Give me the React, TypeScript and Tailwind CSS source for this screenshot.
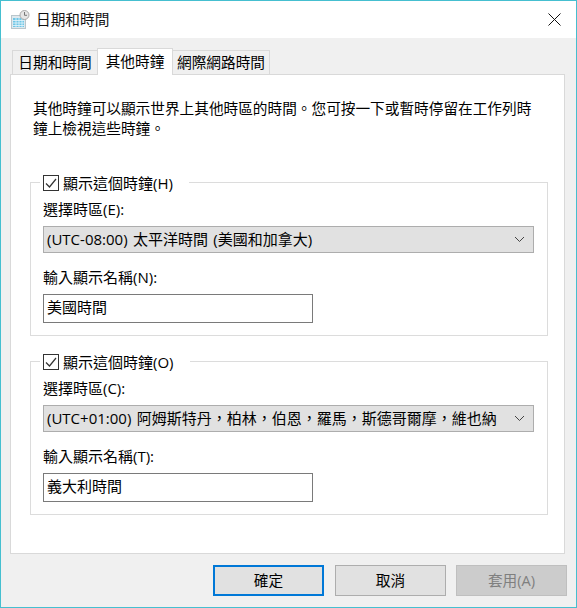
function CheckBox() {
  return (
    <span className="flex h-4 w-4 shrink-0 items-center justify-center border border-[#333] bg-white">
      <svg width="14" height="14" viewBox="0 0 14 14" fill="none" stroke="#333" strokeWidth="1.2">
        <path d="M2 7.5 L5.5 11 L12 3" />
      </svg>
    </span>
  );
}

function Chevron() {
  return (
    <svg width="11" height="7" viewBox="0 0 11 7" fill="none" stroke="#444" strokeWidth="1">
      <path d="M1 1 L5.5 5.5 L10 1" />
    </svg>
  );
}

function ClockBlock({ check, zone, name, label, value }: { check: string; zone: string; name: string; label: string; value: string }) {
  return (
    <fieldset className="ml-[19px] h-[163px] w-[518px] border border-[#dcdcdc] pl-[12px] pr-[13px] text-[15px]">
      <legend className="-ml-[3px] flex h-[18px] items-start gap-[4px] pl-[3px] pr-[16px] pt-[2px]">
        <CheckBox />
        <span className="-mt-[2px] whitespace-nowrap">{check}</span>
      </legend>
      <div className="mt-[7px] h-[22px] leading-[22px]">{label}</div>
      <div className="mt-[6px] flex h-[27px] items-center justify-between border border-[#adadad] bg-[#e1e1e1] pl-[3px] pr-[8px]">
        <span className="whitespace-nowrap pb-[2px] [word-spacing:1.5px]">{zone}</span>
        <Chevron />
      </div>
      <div className="mt-[14px] h-[20px] leading-[20px]">{name}</div>
      <div className="mt-[7px] flex h-[29px] w-[270px] items-center border border-[#7a7a7a] bg-white pb-[3px] pl-[3px]">{value}</div>
    </fieldset>
  );
}

export default function App() {
  return (
    <div
      className="flex h-[608px] w-[577px] flex-col border border-[#45bfd0] bg-[#f0f0f0] text-[14.67px] leading-[20px] text-black"
      style={{ fontFamily: '"Open Sans", "Noto Sans CJK TC", sans-serif' }}
    >
      {/* Title bar */}
      <div className="flex h-[37px] shrink-0 items-center justify-between bg-white pb-[1px] pl-[10px] pr-[15px]">
        <div className="flex items-center gap-[6px]">
          <svg width="19" height="19" viewBox="0 0 19 19">
            <rect x="0.5" y="5.5" width="14" height="13" fill="#dfe9ee" stroke="#b9c6cc" />
            <rect x="2" y="8" width="11" height="9" fill="#6fc6e6" />
            <path d="M2 10.5H13M2 13H13M2 15.5H13M5 8V17M8 8V17M11 8V17" stroke="#e8f6fb" strokeWidth="0.8" />
            <circle cx="13.5" cy="5" r="4.5" fill="#e6e6e6" stroke="#a8a8a8" />
            <path d="M13.5 2V5.3H16" fill="none" stroke="#777" />
          </svg>
          <span className="text-[#111]">日期和時間</span>
        </div>
        <svg width="13" height="13" viewBox="0 0 13 13" stroke="#111" strokeWidth="1">
          <path d="M0.5 0.5 L12.5 12.5 M12.5 0.5 L0.5 12.5" />
        </svg>
      </div>

      {/* Tabs */}
      <div className="mt-[10px] flex h-[27px] shrink-0 items-end pl-[11px]">
        <div className="-mr-px flex h-[25px] w-[86px] items-center justify-center border border-b-0 border-[#d9d9d9] bg-[#f0f0f0] pb-[2px]">日期和時間</div>
        <div className="relative z-10 flex h-[27px] w-[76px] items-center justify-center border border-b-0 border-[#d9d9d9] bg-white pb-[3px]">其他時鐘</div>
        <div className="-ml-px flex h-[25px] w-[98px] items-center justify-center border border-b-0 border-[#d9d9d9] bg-[#f0f0f0] pb-[2px]">網際網路時間</div>
      </div>

      {/* Panel */}
      <div className="-mt-px ml-[9px] h-[480px] w-[555px] shrink-0 border border-[#d9d9d9] bg-white">
        <p className="mt-[23px] w-[525px] pl-[22px] leading-[20px]">
          其他時鐘可以顯示世界上其他時區的時間。您可按一下或暫時停留在工作列時鐘上檢視這些時鐘。
        </p>
        <div className="mt-[35px] flex flex-col gap-[16px]">
          <ClockBlock check="顯示這個時鐘(H)" label="選擇時區(E):" zone="(UTC-08:00) 太平洋時間 (美國和加拿大)" name="輸入顯示名稱(N):" value="美國時間" />
          <ClockBlock check="顯示這個時鐘(O)" label="選擇時區(C):" zone="(UTC+01:00) 阿姆斯特丹，柏林，伯恩，羅馬，斯德哥爾摩，維也納" name="輸入顯示名稱(T):" value="義大利時間" />
        </div>
      </div>

      {/* Buttons */}
      <div className="mt-[11px] flex justify-end gap-[11px] pr-[9px]">
        <button className="h-[31px] w-[111px] border-2 border-[#0078d7] bg-[#e1e1e1] pb-[2px]">確定</button>
        <button className="h-[31px] w-[111px] border border-[#adadad] bg-[#e1e1e1] pb-[2px]">取消</button>
        <button className="-ml-px h-[31px] w-[111px] border border-[#bfbfbf] bg-[#cccccc] pb-[2px] text-[#7f7f7f]">套用(A)</button>
      </div>
    </div>
  );
}
